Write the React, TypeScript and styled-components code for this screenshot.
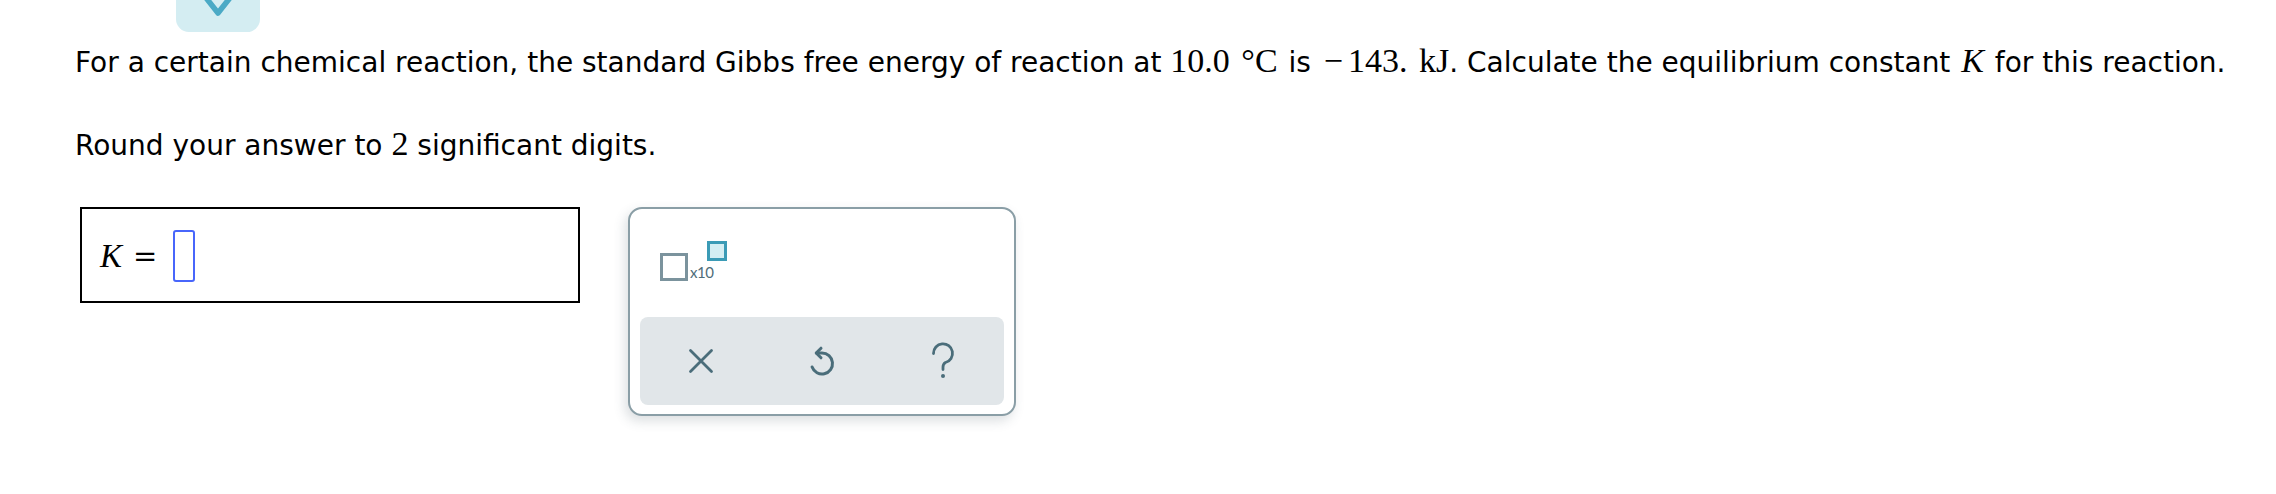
import styled, { createGlobalStyle } from "styled-components";

const GlobalStyle = createGlobalStyle`
  html, body {
    margin: 0;
    padding: 0;
    background: #ffffff;
  }
  body {
    font-family: "DejaVu Sans", Verdana, sans-serif;
    color: #000000;
  }
`;

const Page = styled.div`
  display: flex;
  flex-direction: column;
  padding-left: 75px;
  width: 2276px;
  height: 494px;
  box-sizing: border-box;
`;

const CollapseTab = styled.div`
  margin-left: 101px;
  width: 84px;
  height: 32px;
  background: #d4edf2;
  border-radius: 0 0 13px 13px;
  display: flex;
  justify-content: center;
  align-items: flex-start;
  overflow: hidden;
`;

const Paragraph = styled.p<{ $top: number }>`
  margin: ${(p) => p.$top}px 0 0 0;
  font-size: 28px;
  line-height: 36px;
  white-space: nowrap;
`;

const Math = styled.span<{ $italic?: boolean; $before?: number; $after?: number }>`
  font-family: "Liberation Serif", "Times New Roman", serif;
  font-size: 34px;
  line-height: 1;
  font-style: ${(p) => (p.$italic ? "italic" : "normal")};
  word-spacing: 3px;
  margin-left: ${(p) => p.$before ?? 0}px;
  margin-right: ${(p) => p.$after ?? 0}px;
`;

const MathGap = styled.span`
  display: inline-block;
  width: 5px;
`;

const AnswerRow = styled.div`
  display: flex;
  align-items: flex-start;
  gap: 48px;
  margin-top: 43px;
  margin-left: 5px;
`;

const AnswerBox = styled.div`
  width: 500px;
  height: 96px;
  box-sizing: border-box;
  border: 2px solid #000000;
  display: flex;
  align-items: center;
  padding-left: 18px;
  padding-top: 2px;
`;

const BoxVar = styled.span`
  font-family: "Liberation Serif", "Times New Roman", serif;
  font-style: italic;
  font-size: 33px;
  margin-right: 11px;
`;

const Equals = styled.span`
  font-family: "DejaVu Serif", "Liberation Serif", serif;
  font-size: 29px;
  margin-right: 16px;
`;

const Caret = styled.span`
  display: inline-block;
  width: 22px;
  height: 52px;
  box-sizing: border-box;
  border: 2px solid #4866fb;
  border-radius: 3px;
`;

const Panel = styled.div`
  width: 388px;
  height: 209px;
  box-sizing: border-box;
  border: 2px solid #8a9ea6;
  border-radius: 14px;
  background: #ffffff;
  box-shadow: -3px 5px 12px rgba(60, 80, 90, 0.18);
  padding: 12px 10px 9px 10px;
  display: flex;
  flex-direction: column;
  justify-content: space-between;
`;

const SciWidget = styled.div`
  display: flex;
  align-items: flex-start;
  margin: 20px 0 0 20px;
`;

const BaseSquare = styled.span`
  width: 28px;
  height: 28px;
  box-sizing: border-box;
  border: 3px solid #7b939d;
  margin-top: 12px;
`;

const TimesTen = styled.span`
  font-family: Lato, "Open Sans", sans-serif;
  font-size: 15px;
  line-height: 15px;
  color: #4f6d79;
  margin-top: 24px;
  margin-left: 2px;
  letter-spacing: -0.4px;
`;

const ExpSquare = styled.span`
  width: 20px;
  height: 20px;
  box-sizing: border-box;
  border: 3px solid #3b9bb6;
  background: #d4eef3;
  margin-left: -7px;
`;

const ToolBar = styled.div`
  height: 88px;
  background: #e1e6e9;
  border-radius: 8px;
  display: grid;
  grid-template-columns: repeat(3, 1fr);
  align-items: center;
  justify-items: center;
`;

const ToolButton = styled.button`
  border: none;
  background: transparent;
  padding: 0;
  display: flex;
  align-items: center;
  justify-content: center;
  color: #4a6d7a;
  cursor: pointer;
`;

const Chevron = () => (
  <svg width="38" height="20" viewBox="0 0 38 20">
    <polyline
      points="4,-6 19,13 34,-6"
      fill="none"
      stroke="#4baac6"
      strokeWidth="5.5"
      strokeLinecap="round"
      strokeLinejoin="round"
    />
  </svg>
);

const ClearIcon = () => (
  <svg width="26" height="26" viewBox="0 0 26 26">
    <path
      d="M2.5 2.5 L23.5 23.5 M23.5 2.5 L2.5 23.5"
      stroke="currentColor"
      strokeWidth="2.8"
      strokeLinecap="round"
    />
  </svg>
);

const UndoIcon = () => (
  <svg width="30" height="32" viewBox="0 0 30 32">
    <path
      d="M9.5 8 H15 A10.5 10.5 0 1 1 5.1 22"
      fill="none"
      stroke="currentColor"
      strokeWidth="3"
      strokeLinecap="round"
    />
    <path
      d="M14 3.2 L9.2 8 L14 12.8"
      fill="none"
      stroke="currentColor"
      strokeWidth="3"
      strokeLinecap="round"
      strokeLinejoin="round"
    />
  </svg>
);

const HelpIcon = () => (
  <svg width="26" height="38" viewBox="0 0 26 38">
    <path
      d="M3.5 11.5 A9.5 9.5 0 1 1 15.5 20.5 Q13 22 13 25 V27.5"
      fill="none"
      stroke="currentColor"
      strokeWidth="2.8"
      strokeLinecap="round"
    />
    <circle cx="13" cy="34" r="2" fill="currentColor" />
  </svg>
);

export default function App() {
  return (
    <>
      <GlobalStyle />
      <Page>
        <CollapseTab>
          <Chevron />
        </CollapseTab>

        <Paragraph $top={12}>
          For a certain chemical reaction, the standard Gibbs free energy of
          reaction at <Math $after={2}>10.0 °C</Math> is{" "}
          <Math $before={4}>
            −<MathGap />
            143. kJ
          </Math>
          . Calculate the equilibrium constant{" "}
          <Math $italic $before={2} $after={2}>
            K
          </Math>{" "}
          for this reaction.
        </Paragraph>

        <Paragraph $top={46}>
          Round your answer to <Math>2</Math> significant digits.
        </Paragraph>

        <AnswerRow>
          <AnswerBox>
            <BoxVar>K</BoxVar>
            <Equals>=</Equals>
            <Caret />
          </AnswerBox>

          <Panel>
            <SciWidget>
              <BaseSquare />
              <TimesTen>x10</TimesTen>
              <ExpSquare />
            </SciWidget>
            <ToolBar>
              <ToolButton aria-label="Clear">
                <ClearIcon />
              </ToolButton>
              <ToolButton aria-label="Undo">
                <UndoIcon />
              </ToolButton>
              <ToolButton aria-label="Help">
                <HelpIcon />
              </ToolButton>
            </ToolBar>
          </Panel>
        </AnswerRow>
      </Page>
    </>
  );
}
